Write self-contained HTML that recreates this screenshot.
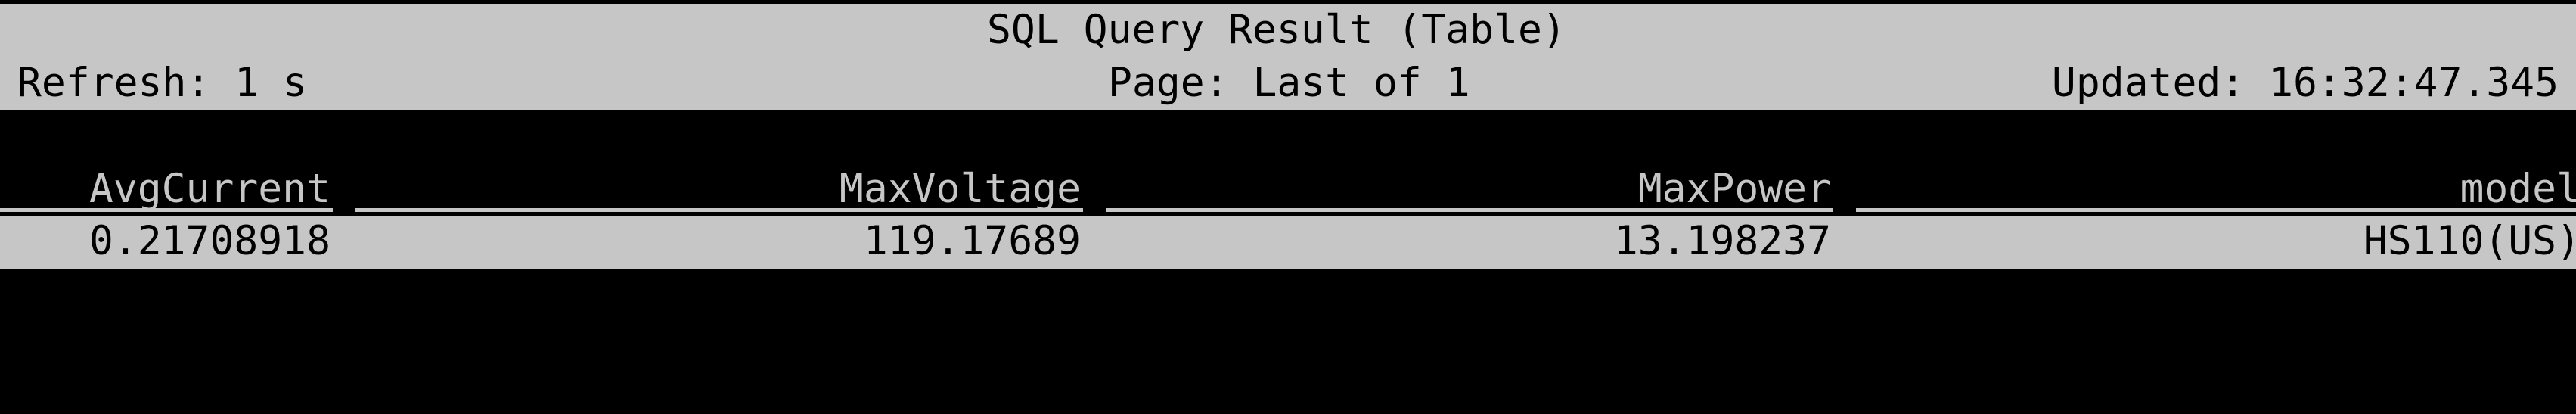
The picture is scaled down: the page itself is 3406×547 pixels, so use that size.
<!DOCTYPE html>
<html><head><meta charset="utf-8"><style>
html,body{margin:0;padding:0;background:#000;width:3406px;height:547px;overflow:hidden}
body{position:relative;font-family:"DejaVu Sans Mono","Liberation Mono",monospace;font-size:53px;line-height:53px}
.t{position:absolute;white-space:pre}
.bar{position:absolute;left:0;width:3406px;background:#c6c6c6}
.k{color:#000}.g{color:#c6c6c6}
.r{text-align:right}
</style></head><body>
<div class="bar" style="top:5px;height:140px"></div>
<div class="t k" style="left:1305px;top:13px">SQL Query Result (Table)</div>
<div class="t k" style="left:23px;top:83px">Refresh: 1 s</div>
<div class="t k" style="left:1465px;top:83px">Page: Last of 1</div>
<div class="t k r" style="right:23px;top:83px">Updated: 16:32:47.345</div>

<div class="t g r" style="right:calc(3406px - 437px);top:223px">AvgCurrent</div>
<div class="t g r" style="right:calc(3406px - 1429px);top:223px">MaxVoltage</div>
<div class="t g r" style="right:calc(3406px - 2421px);top:223px">MaxPower</div>
<div class="t g r" style="right:-6px;top:223px">model</div>

<div class="bar" style="top:275px;height:5px;width:440px"></div>
<div class="bar" style="top:275px;height:5px;left:470px;width:962px"></div>
<div class="bar" style="top:275px;height:5px;left:1462px;width:962px"></div>
<div class="bar" style="top:275px;height:5px;left:2454px;width:952px"></div>

<div class="bar" style="top:285px;height:70px"></div>
<div class="t k r" style="right:calc(3406px - 437px);top:292px">0.21708918</div>
<div class="t k r" style="right:calc(3406px - 1429px);top:292px">119.17689</div>
<div class="t k r" style="right:calc(3406px - 2421px);top:292px">13.198237</div>
<div class="t k r" style="right:-6px;top:292px">HS110(US)</div>
</body></html>
